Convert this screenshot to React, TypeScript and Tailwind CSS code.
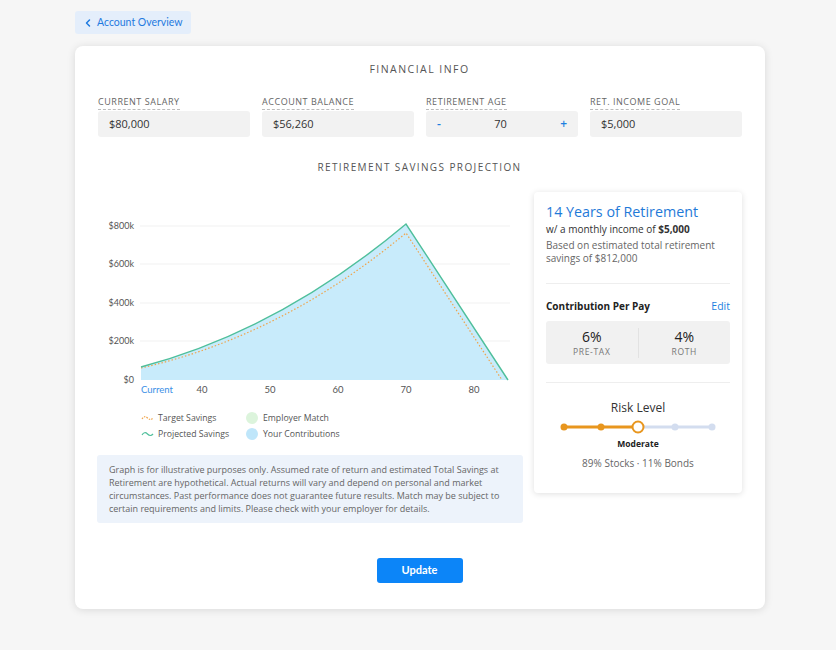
import { ChevronLeft } from 'lucide-react';

// Input fields across the top of the card
const fields = [
  { label: 'Current Salary', value: '$80,000' },
  { label: 'Account Balance', value: '$56,260' },
  { label: 'Retirement Age', value: '70', stepper: true },
  { label: 'Ret. Income Goal', value: '$5,000' },
];

const yTicks = [
  { label: '$800k', y: 226 },
  { label: '$600k', y: 264 },
  { label: '$400k', y: 303 },
  { label: '$200k', y: 341 },
  { label: '$0', y: 380 },
];

const xTicks = [
  { label: '40', x: 202 },
  { label: '50', x: 270 },
  { label: '60', x: 338 },
  { label: '70', x: 406 },
  { label: '80', x: 474 },
];

function ProjectionChart() {
  // viewBox uses page coordinates so the numbers read straight off the picture
  return (
    <svg width={426} height={205} viewBox="97 192 426 205" className="block">
      {yTicks.slice(0, 4).map((t) => (
        <line key={t.label} x1={140} x2={510} y1={t.y} y2={t.y} stroke="#f1f1f1" strokeWidth={1} />
      ))}
      {yTicks.map((t) => (
        <text
          key={t.label}
          x={134}
          y={t.y + 3}
          textAnchor="end"
          fontSize={9}
          fill="#555"
          fontFamily="Lato, sans-serif"
        >
          {t.label}
        </text>
      ))}
      <path d="M141 367 Q 280 330 406 224 L 508 380 L 141 380 Z" fill="#c8ebfb" />
      <path
        d="M141 368 Q 282 336 406 233 L 502 380"
        fill="none"
        stroke="#f0a44a"
        strokeWidth={1.2}
        strokeDasharray="1.5 2"
      />
      <path d="M141 367 Q 280 330 406 224 L 508 380" fill="none" stroke="#4fbf9b" strokeWidth={1.4} />
      <text x={141} y={393} fontSize={9.5} fill="#3b8fe6" fontFamily="Lato, sans-serif">
        Current
      </text>
      {xTicks.map((t) => (
        <text
          key={t.label}
          x={t.x}
          y={393}
          textAnchor="middle"
          fontSize={9.5}
          fill="#555"
          fontFamily="Lato, sans-serif"
        >
          {t.label}
        </text>
      ))}
    </svg>
  );
}

function Squiggle({ color, dashed }: { color: string; dashed?: boolean }) {
  return (
    <svg width={13} height={8} viewBox="0 0 13 8">
      <path
        d="M1 5 Q 3.5 1 6.5 4 T 12 4"
        fill="none"
        stroke={color}
        strokeWidth={1.2}
        strokeDasharray={dashed ? '1.5 1.2' : undefined}
      />
    </svg>
  );
}

function RiskSlider() {
  const dots = [18, 55, 92, 129, 166];
  return (
    <svg width={184} height={14} viewBox="0 0 184 14" className="block">
      <line x1={18} x2={92} y1={7} y2={7} stroke="#e8961e" strokeWidth={3} />
      <line x1={92} x2={166} y1={7} y2={7} stroke="#d3ddef" strokeWidth={3} />
      {dots.map((x, i) =>
        i === 2 ? (
          <circle key={x} cx={x} cy={7} r={5.5} fill="#fff" stroke="#e8961e" strokeWidth={2} />
        ) : (
          <circle key={x} cx={x} cy={7} r={3.5} fill={i < 2 ? '#e8961e' : '#d3ddef'} />
        )
      )}
    </svg>
  );
}

export default function App() {
  return (
    <div className="min-h-[650px] w-full bg-[#f6f6f6] pl-[75px] pt-[11px] font-['Open_Sans',sans-serif] text-[#333]">
      <button className="flex h-[23px] items-center gap-[3px] rounded-[3px] bg-[#e4eefb] pl-[7px] pr-[8px] font-['Lato',sans-serif] text-[10.5px] text-[#1f7ae0]">
        <ChevronLeft className="h-[12px] w-[12px]" strokeWidth={3} />
        Account Overview
      </button>

      <div className="mt-[12px] h-[563px] w-[690px] rounded-[8px] bg-white pl-[22px] pr-[23px] pt-[14px] shadow-[0_1px_8px_rgba(0,0,0,0.12)]">
        <h2 className="text-center text-[10.5px] leading-[18px] tracking-[0.14em] text-[#555]">FINANCIAL INFO</h2>

        <div className="mt-[15px] grid grid-cols-4 gap-x-[12px] pl-[1px]">
          {fields.map((f) => (
            <div key={f.label} className="leading-[12px]">
              <span className="border-b border-dashed border-[#bbb] pb-[1px] text-[9px] uppercase leading-[12px] tracking-[0.06em] text-[#666]">
                {f.label}
              </span>
              <div className="mt-[3px] flex h-[26px] items-center rounded-[3px] bg-[#f2f2f2] px-[11px] text-[11px] text-[#333]">
                {f.stepper ? (
                  <div className="flex w-full items-center justify-between">
                    <span className="text-[12px] font-semibold text-[#1c7fe0]">-</span>
                    <span>{f.value}</span>
                    <span className="text-[12px] font-semibold text-[#1c7fe0]">+</span>
                  </div>
                ) : (
                  f.value
                )}
              </div>
            </div>
          ))}
        </div>

        <h2 className="mt-[21px] text-center text-[10px] leading-[18px] tracking-[0.14em] text-[#555]">
          RETIREMENT SAVINGS PROJECTION
        </h2>

        <div className="mt-[16px] flex gap-[11px]">
          {/* Left column: chart, legend, disclaimer */}
          <div className="w-[426px]">
            <ProjectionChart />
            <div className="mt-[13px] grid w-[220px] grid-cols-[105px_1fr] pl-[44px] text-[8.7px] leading-[16px] text-[#555]">
              <div className="flex items-center gap-[4px]">
                <Squiggle color="#f0a44a" dashed />
                Target Savings
              </div>
              <div className="flex items-center gap-[5px] whitespace-nowrap">
                <span className="h-[12px] w-[12px] rounded-full bg-[#dcf4dc]" />
                Employer Match
              </div>
              <div className="flex items-center gap-[4px] whitespace-nowrap">
                <Squiggle color="#4fbf9b" />
                Projected Savings
              </div>
              <div className="flex items-center gap-[5px] whitespace-nowrap">
                <span className="h-[12px] w-[12px] rounded-full bg-[#bfe6fa]" />
                Your Contributions
              </div>
            </div>
            <div className="mt-[13px] rounded-[3px] bg-[#edf3fb] px-[12px] py-[8px] text-[9px] leading-[13px] text-[#666]">
              Graph is for illustrative purposes only. Assumed rate of return and estimated Total Savings at
              Retirement are hypothetical. Actual returns will vary and depend on personal and market
              circumstances. Past performance does not guarantee future results. Match may be subject to
              certain requirements and limits. Please check with your employer for details.
            </div>
          </div>

          {/* Right column: retirement summary */}
          <div className="h-[301px] w-[208px] rounded-[4px] bg-white px-[12px] pt-[10px] shadow-[0_1px_6px_rgba(0,0,0,0.13)]">
            <div className="text-[14.3px] leading-[20px] text-[#1f7ad8]">14 Years of Retirement</div>
            <div className="text-[10px] leading-[14px] text-[#333]">
              w/ a monthly income of <span className="font-bold">$5,000</span>
            </div>
            <div className="mt-[3px] text-[10px] leading-[13px] text-[#666]">
              Based on estimated total retirement savings of $812,000
            </div>
            <div className="mt-[18px] border-t border-[#eee]" />
            <div className="mt-[15px] flex items-center justify-between text-[10px] leading-[14px]">
              <span className="font-bold text-[#222]">Contribution Per Pay</span>
              <span className="text-[10.5px] text-[#1c7fe0]">Edit</span>
            </div>
            <div className="mt-[8px] flex h-[43px] items-center rounded-[3px] bg-[#f1f1f1]">
              {[
                { v: '6%', l: 'PRE-TAX' },
                { v: '4%', l: 'ROTH' },
              ].map((c, i) => (
                <div
                  key={c.l}
                  className={`flex flex-1 flex-col items-center ${i === 0 ? 'border-r border-[#e2e2e2]' : ''}`}
                >
                  <span className="text-[14px] leading-[18px] text-[#222]">{c.v}</span>
                  <span className="text-[8.5px] leading-[12px] tracking-[0.08em] text-[#777]">{c.l}</span>
                </div>
              ))}
            </div>
            <div className="mt-[18px] border-t border-[#eee]" />
            <div className="mt-[17px] text-center text-[12px] leading-[16px] text-[#333]">Risk Level</div>
            <div className="mt-[4px]">
              <RiskSlider />
            </div>
            <div className="mt-[4px] text-center text-[8.5px] font-bold leading-[12px] text-[#222]">Moderate</div>
            <div className="mt-[6px] text-center text-[10px] leading-[14px] text-[#666]">89% Stocks · 11% Bonds</div>
          </div>
        </div>

        <div className="mt-[35px] flex justify-center">
          <button className="h-[25px] w-[86px] rounded-[3px] bg-[#0c85f8] font-['Lato',sans-serif] text-[11px] font-bold text-white">
            Update
          </button>
        </div>
      </div>
    </div>
  );
}
